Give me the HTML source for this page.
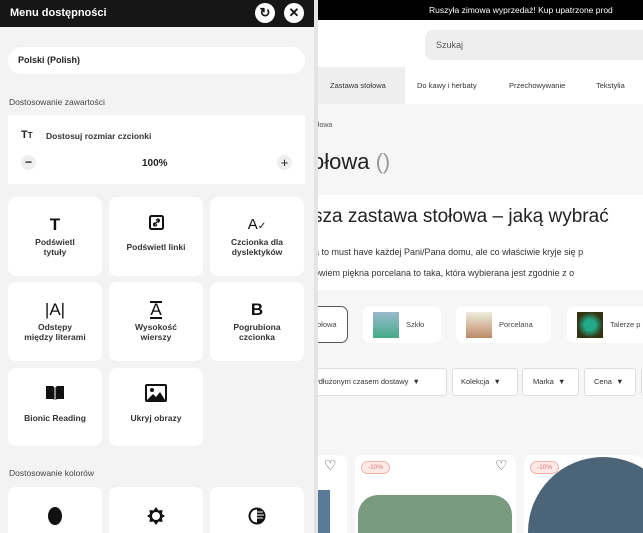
<!DOCTYPE html>
<html style="width:643px;height:533px;overflow:hidden"><head><meta charset="utf-8"><style>
*{box-sizing:border-box;margin:0;padding:0}
body{width:643px;height:533px;overflow:hidden;position:relative;font-family:"Liberation Sans",sans-serif;background:#f6f6f6;color:#222}
.abs{position:absolute}
.panel{position:absolute;left:0;top:0;width:314px;height:533px;background:#f3f3f4;overflow:hidden}
.ph{height:27px;background:#161616;color:#fff;font-weight:bold;font-size:11px;padding:7px 10px}
.circ{position:absolute;top:3px;width:20px;height:20px;border-radius:50%;background:#fff;color:#111;font-size:13px;text-align:center;line-height:20px;font-weight:bold}
.card{position:absolute;background:#fff;border-radius:8px;text-align:center;font-size:8.5px;font-weight:bold;color:#333;line-height:10px;overflow:hidden}
.card .ic{height:24px;margin-top:16px;font-size:17px;font-weight:bold;color:#111;line-height:24px}
.lbl{position:absolute;left:9px;font-size:8.5px;color:#444}
.chip{position:absolute;top:306px;height:37px;background:#fff;border-radius:7px;font-size:7.5px;color:#444}
.flt{position:absolute;top:368px;height:28px;background:#fff;border:1px solid #ddd;border-radius:3px;font-size:7.5px;color:#333;line-height:26px;padding:0 8px}
.prod{position:absolute;top:455px;height:78px;background:#fff;border-radius:8px 8px 0 0;overflow:hidden}
.badge{position:absolute;top:6px;left:6px;border:1px solid #f0b0a8;background:#fde9e6;color:#d77;font-size:6.5px;border-radius:8px;padding:2px 6px;z-index:2}
</style></head><body>
<div class="abs" style="left:314px;top:0;width:329px;height:20px;background:#000;color:#fff;font-size:8.5px;line-height:20px;padding-left:115px;white-space:nowrap;overflow:hidden">Ruszyła zimowa wyprzedaż! Kup upatrzone prod</div>
<div class="abs" style="left:314px;top:20px;width:329px;height:47px;background:#fff"></div>
<div class="abs" style="left:425px;top:30px;width:218px;height:30px;background:#eee;border-radius:8px 0 0 8px;font-size:9px;color:#555;line-height:30px;padding-left:11px">Szukaj</div>
<div class="abs" style="left:314px;top:67px;width:329px;height:37px;background:#fff;font-size:7.5px;color:#333;line-height:37px;white-space:nowrap;overflow:hidden">
<span class="abs" style="left:0;width:91px;height:37px;background:#eee;padding-left:16px">Zastawa stołowa</span>
<span class="abs" style="left:103px">Do kawy i herbaty</span>
<span class="abs" style="left:195px">Przechowywanie</span>
<span class="abs" style="left:282px">Tekstylia</span></div>
<div class="abs" style="left:314px;top:122px;font-size:7px;color:#555">ołowa</div>
<div class="abs" style="left:312px;top:149px;font-size:22px;color:#222">ołowa <span style="color:#999">()</span></div>
<div class="abs" style="left:314px;top:195px;width:329px;height:95px;background:#fff"></div>
<div class="abs" style="left:313px;top:206px;width:330px;overflow:hidden;font-size:19px;color:#222;white-space:nowrap">sza zastawa stołowa – jaką wybrać</div>
<div class="abs" style="left:314px;top:242px;width:329px;overflow:hidden;font-size:9px;color:#333;white-space:nowrap;line-height:21px">a to must have każdej Pani/Pana domu, ale co właściwie kryje się p<br>owiem piękna porcelana to taka, która wybierana jest zgodnie z o</div>
<div class="chip" style="left:300px;width:48px;border:1px solid #555;line-height:35px;padding-left:16px">ołowa</div>
<div class="chip" style="left:363px;width:78px"><div class="abs" style="left:10px;top:6px;width:26px;height:26px;background:linear-gradient(#9bc,#4a8)"></div><span class="abs" style="left:43px;top:14px">Szkło</span></div>
<div class="chip" style="left:456px;width:95px"><div class="abs" style="left:10px;top:6px;width:26px;height:26px;background:linear-gradient(#eed,#b86)"></div><span class="abs" style="left:43px;top:14px">Porcelana</span></div>
<div class="chip" style="left:567px;width:76px;border-radius:7px 0 0 7px;overflow:hidden;white-space:nowrap"><div class="abs" style="left:10px;top:6px;width:26px;height:26px;background:radial-gradient(#2a8 30%,#331 70%)"></div><span class="abs" style="left:43px;top:14px">Talerze p</span></div>
<div class="flt" style="left:300px;width:147px;padding-left:14px">ydłużonym czasem dostawy &nbsp;▼</div>
<div class="flt" style="left:452px;width:66px">Kolekcja &nbsp;▼</div>
<div class="flt" style="left:522px;width:57px;padding-left:10px">Marka &nbsp;▼</div>
<div class="flt" style="left:584px;width:52px;padding-left:9px">Cena &nbsp;▼</div>
<div class="flt" style="left:641px;width:2px;border-right:none"></div>
<div class="prod" style="left:300px;width:47px"><span class="abs" style="left:24px;top:2px;font-size:14px;color:#444">♡</span><div class="abs" style="left:0;top:35px;width:30px;height:45px;background:#5a7a9a"></div></div>
<div class="prod" style="left:355px;width:161px"><div class="badge">-10%</div><span class="abs" style="left:140px;top:2px;font-size:14px;color:#444">♡</span><div class="abs" style="left:3px;top:40px;width:154px;height:50px;background:#7a9a80;border-radius:20px 20px 0 0"></div></div>
<div class="prod" style="left:524px;width:119px"><div class="badge">-10%</div><div class="abs" style="left:4px;top:2px;width:150px;height:150px;border-radius:50%;background:#4c6478"></div></div>
<div class="abs" style="left:314px;top:0;width:4px;height:533px;background:#e4e4e4"></div>
<div class="panel">
<div class="ph">Menu dostępności</div>
<div class="circ" style="left:255px">↻</div>
<div class="circ" style="left:284px">✕</div>
<div class="abs" style="left:8px;top:47px;width:297px;height:27px;background:#fff;border-radius:14px;font-size:9px;font-weight:bold;line-height:27px;padding-left:10px;color:#222">Polski (Polish)</div>
<div class="lbl" style="top:97px">Dostosowanie zawartości</div>
<div class="abs" style="left:8px;top:115px;width:297px;height:69px;background:#fff">
<span class="abs" style="left:13px;top:14px;font-size:11px;font-weight:bold">T<span style="font-size:8px">T</span></span>
<span class="abs" style="left:38px;top:16px;font-size:8.5px;font-weight:bold;color:#333">Dostosuj rozmiar czcionki</span>
<span class="abs" style="left:13px;top:40px;width:15px;height:15px;border-radius:50%;background:#eee;text-align:center;line-height:15px;font-size:12px;font-weight:bold">−</span>
<span class="abs" style="left:134px;top:43px;font-size:10px;font-weight:bold">100%</span>
<span class="abs" style="left:269px;top:40px;width:15px;height:15px;border-radius:50%;background:#eee;text-align:center;line-height:15px;font-size:13px">+</span>
</div>
<div class="card" style="left:8px;top:197px;width:94px;height:79px"><div class="ic">T</div>Podświetl<br>tytuły</div>
<div class="card" style="left:109px;top:197px;width:94px;height:79px"><div class="ic"><svg width="15" height="15" viewBox="0 0 15 15"><rect x="1" y="1" width="13" height="13" rx="1.5" fill="none" stroke="#111" stroke-width="2"/><path d="M5 10l5-5M6 7.5l-1 1a1.4 1.4 0 002 2l1-1M9 7.5l1-1a1.4 1.4 0 00-2-2l-1 1" stroke="#111" stroke-width="1.3" fill="none"/></svg></div><div style="margin-top:5px">Podświetl linki</div></div>
<div class="card" style="left:210px;top:197px;width:94px;height:79px"><div class="ic" style="font-size:15px;font-weight:normal">A<span style="font-size:10px">✓</span></div>Czcionka dla<br>dyslektyków</div>
<div class="card" style="left:8px;top:282px;width:94px;height:79px"><div class="ic" style="font-weight:normal">|A|</div>Odstępy<br>między literami</div>
<div class="card" style="left:109px;top:282px;width:94px;height:79px"><div class="ic" style="font-weight:normal"><span style="border-top:2px solid #111;border-bottom:2px solid #111;line-height:14px;display:inline-block">A</span></div>Wysokość<br>wierszy</div>
<div class="card" style="left:210px;top:282px;width:94px;height:79px"><div class="ic">B</div>Pogrubiona<br>czcionka</div>
<div class="card" style="left:8px;top:368px;width:94px;height:78px"><div class="ic"><svg width="20" height="16" viewBox="0 0 20 16"><path d="M1 1h7l1.5 1.5V15L8 14H1zM19 1h-7l-1.5 1.5V15L12 14h7z" fill="#111"/></svg></div><div style="margin-top:5px">Bionic Reading</div></div>
<div class="card" style="left:109px;top:368px;width:94px;height:78px"><div class="ic"><svg width="22" height="18" viewBox="0 0 22 18"><rect x="0" y="0" width="22" height="18" rx="2" fill="#111"/><rect x="2" y="2" width="18" height="14" fill="#fff"/><circle cx="7" cy="6" r="2" fill="#111"/><path d="M2 16l6-6 3 3 4-5 5 8z" fill="#111"/></svg></div><div style="margin-top:5px">Ukryj obrazy</div></div>
<div class="lbl" style="top:468px">Dostosowanie kolorów</div>
<div class="card" style="left:8px;top:487px;width:94px;height:46px;border-radius:8px 8px 0 0"><div class="ic"><span style="display:inline-block;width:14px;height:18px;border-radius:50%;background:#111;vertical-align:middle"></span></div></div>
<div class="card" style="left:109px;top:487px;width:94px;height:46px;border-radius:8px 8px 0 0"><div class="ic"><svg width="18" height="18" viewBox="0 0 18 18" style="vertical-align:middle"><path d="M9 0l2.5 3.5 4 -.5-.5 4L18 9l-3 2 .5 4-4-.5L9 18l-2.5-3.5-4 .5.5-4L0 9l3-2-.5-4 4 .5z" fill="#111"/><circle cx="9" cy="9" r="4" fill="#fff"/></svg></div></div>
<div class="card" style="left:210px;top:487px;width:94px;height:46px;border-radius:8px 8px 0 0"><div class="ic"><svg width="18" height="18" viewBox="0 0 18 18" style="vertical-align:middle"><circle cx="9" cy="9" r="7.5" fill="none" stroke="#111" stroke-width="2"/><path d="M9 1.5a7.5 7.5 0 010 15z" fill="#111"/><path d="M9 5h6M9 8h7M9 11h6" stroke="#fff" stroke-width="1"/></svg></div></div>
</div>
</body></html>
